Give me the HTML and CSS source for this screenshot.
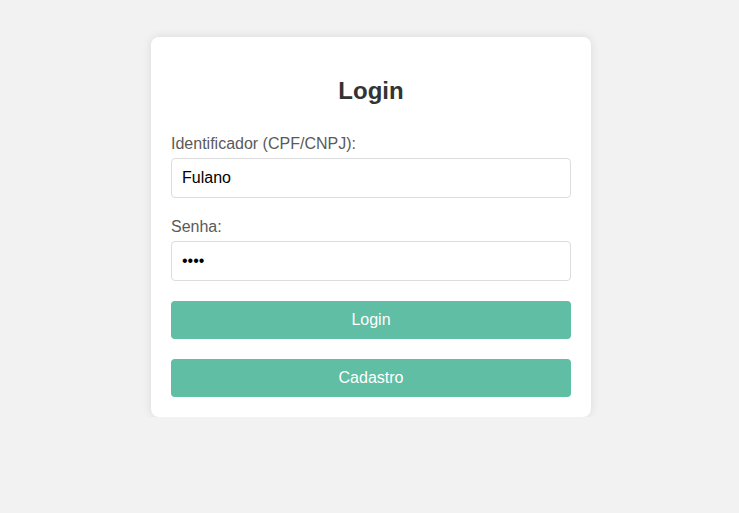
FILE: index.html
```html
<!DOCTYPE html>
<html lang="pt-BR">
<head>
<meta charset="utf-8">
<title>Login</title>
<link rel="stylesheet" href="styles.css">
</head>
<body>
<div class="card">
  <h2 class="title">Login</h2>
  <form class="form">
    <div class="form-group">
      <label class="label" for="id">Identificador (CPF/CNPJ):</label>
      <input class="input" id="id" type="text" value="Fulano">
    </div>
    <div class="form-group">
      <label class="label" for="senha">Senha:</label>
      <input class="input" id="senha" type="password" value="1234">
    </div>
    <button class="btn" type="button">Login</button>
    <button class="btn" type="button">Cadastro</button>
  </form>
</div>
</body>
</html>
```

FILE: styles.css
```css
html, body {
  margin: 0;
  padding: 0;
}
body {
  background: #f2f2f2;
  font-family: "Liberation Sans", Arial, sans-serif;
  padding: 37px 0 0 151px;
}
.card {
  width: 400px;
  background: #ffffff;
  border-radius: 8px;
  box-shadow: 0 0 10px rgba(0, 0, 0, 0.1);
  padding: 40px 20px 20px;
}
.title {
  margin: 0 0 30px;
  text-align: center;
  font-size: 24px;
  font-weight: bold;
  color: #333333;
}
.form {
  display: flex;
  flex-direction: column;
  gap: 20px;
}
.form-group {
  display: flex;
  flex-direction: column;
}
.label {
  display: block;
  margin-bottom: 5px;
  font-size: 16px;
  color: #5a5a5a;
}
.input {
  box-sizing: border-box;
  width: 100%;
  height: 40px;
  padding: 10px;
  border: 1px solid #dddddd;
  border-radius: 4px;
  font-family: "Liberation Sans", Arial, sans-serif;
  font-size: 16px;
  color: #000000;
  background: #ffffff;
  outline: none;
}
.btn {
  width: 100%;
  height: 38px;
  padding: 10px;
  border: none;
  border-radius: 4px;
  background: #5fbea3;
  color: #ffffff;
  font-family: "Liberation Sans", Arial, sans-serif;
  font-size: 16px;
  cursor: pointer;
}
```
